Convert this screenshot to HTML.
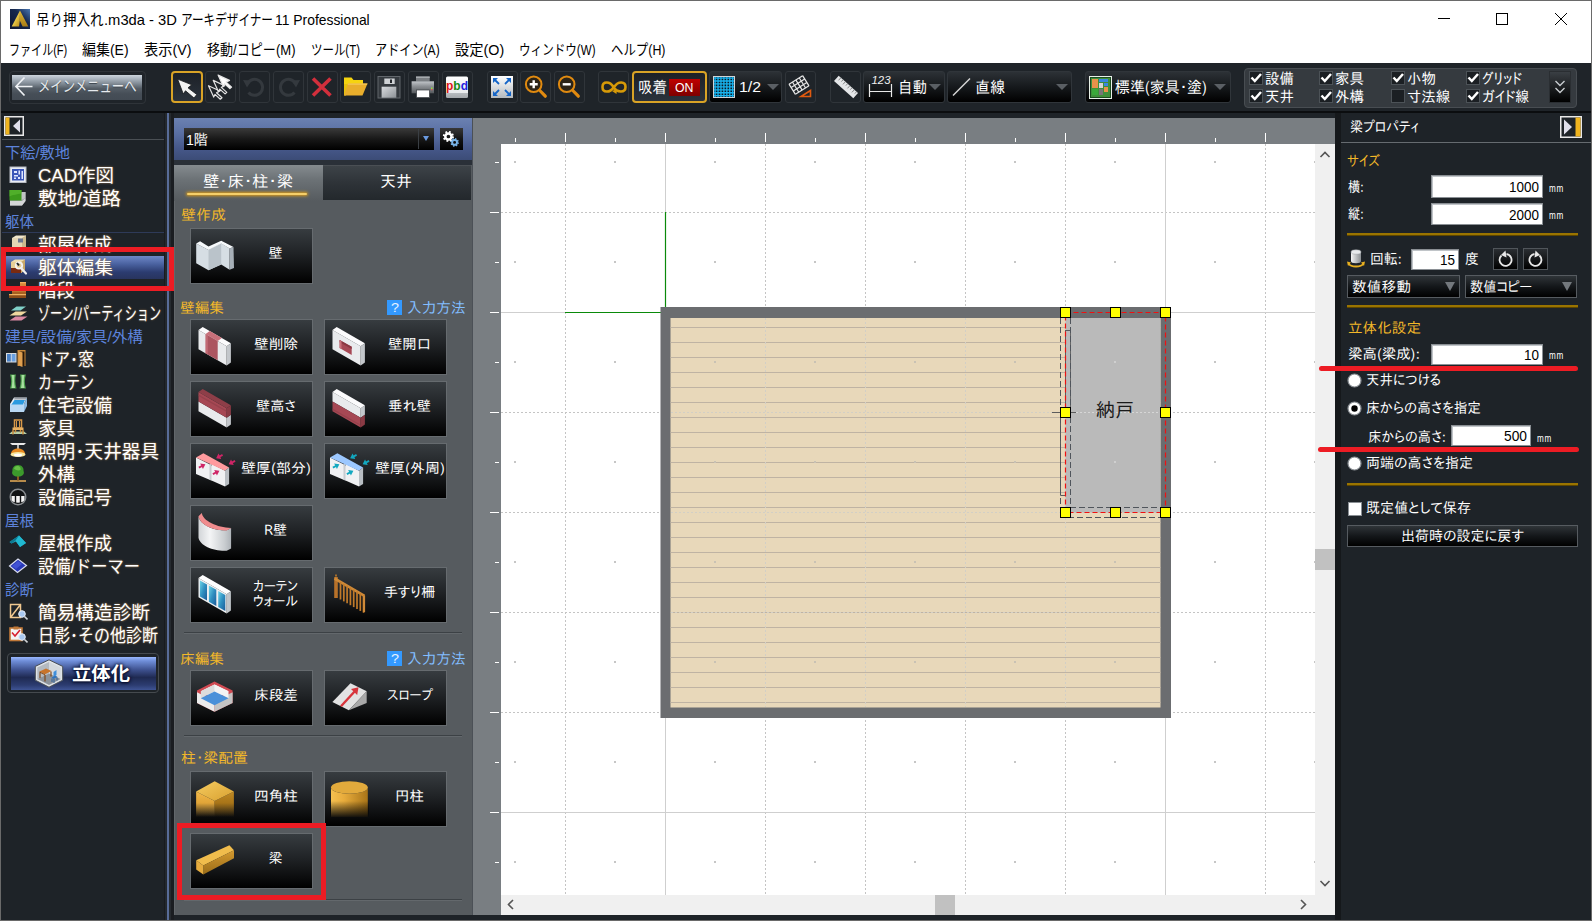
<!DOCTYPE html>
<html lang="ja">
<head>
<meta charset="utf-8">
<title>吊り押入れ.m3da - 3D アーキデザイナー11 Professional</title>
<style>
html,body{margin:0;padding:0;background:#1e2328;}
body{width:1592px;height:921px;overflow:hidden;position:relative;font-family:"Liberation Sans","Noto Sans CJK JP",sans-serif;}
#app{position:absolute;left:0;top:0;width:1592px;height:921px;overflow:hidden;background:#1e2328;}
.abs{position:absolute;}
.t{white-space:nowrap;transform-origin:0 50%;}
.ui{font-family:"Liberation Sans","Noto Sans CJK JP",sans-serif;}
.gothic{font-family:"Liberation Sans","IPAPGothic","IPAGothic",sans-serif;}
.gothicj{font-family:"IPAPGothic","IPAGothic","Liberation Sans",sans-serif;}

#titlebar{left:1px;top:1px;width:1590px;height:62px;background:#fff;}
#toolbar{left:1px;top:63px;width:1590px;height:48px;background:#1f2429;}
#toolbar-line{left:1px;top:111px;width:1590px;height:2px;background:#0b0d0f;}
#wb{left:0;top:0;width:1590px;height:919px;border:1px solid #4d5155;border-top-color:#3c3f42;pointer-events:none;}
.tb{top:71px;width:31px;height:31.500px;box-sizing:border-box;border:1px solid #30353a;border-radius:3px;background:#1f2429;}
.dd{top:71px;height:32px;box-sizing:border-box;border:1px solid #30353a;border-radius:3px;background:linear-gradient(#2c3136 0%,#16191c 50%,#000 100%);}
.arr{width:0;height:0;border-left:6px solid transparent;border-right:6px solid transparent;border-top:6px solid #5a5f64;}
.cb{width:14px;height:14px;box-sizing:border-box;border:1px solid #4c5257;background:#1b1f23;}

.sbh{color:#5d83dc;}
.sbi{color:#fff;text-shadow:0 0 2px #c8a070,0 0 1px #000;}

.pb{width:123px;height:56px;box-sizing:border-box;border:1px solid #666b6f;background:linear-gradient(#373c40 0%,#202326 45%,#0c0d0e 80%,#000 100%);}
.sec{color:#f3b829;}
.hlp{color:#82beff;}

.inp{background:#fff;border:1px solid #8a8f94;box-sizing:border-box;box-shadow:inset 1px 1px 0 #c0c4c8;}
.rdd{background:linear-gradient(#2f3438 0%,#14171a 50%,#000 100%);border:1px solid #565b60;box-sizing:border-box;}
.ysep{height:2px;background:#9a7400;border-bottom:1px solid #5c4500;}

</style>
</head>
<body>
<div id="app">
<div class="abs" id="titlebar"></div>
<div class="abs" id="toolbar"></div>
<div class="abs" id="toolbar-line"></div>

<svg class="abs" style="left:10px;top:9px" width="20" height="20" viewBox="0 0 20 20"><defs><linearGradient id="gti1" x1="0" y1="0" x2="1" y2="1"><stop offset="0" stop-color="#fdf3a0"/><stop offset=".5" stop-color="#e8c848"/><stop offset="1" stop-color="#b88a18"/></linearGradient><linearGradient id="gti2" x1="0" y1="0" x2="0" y2="1"><stop offset="0" stop-color="#e0b838"/><stop offset="1" stop-color="#a87c14"/></linearGradient><linearGradient id="gti3" x1="0" y1="1" x2="1" y2="0"><stop offset="0" stop-color="#0c1430"/><stop offset=".6" stop-color="#16284e"/><stop offset="1" stop-color="#4a78b4"/></linearGradient></defs><rect width="20" height="20" fill="url(#gti3)"/><path d="M10 1.500 L9.800 11.400 L9.100 17.500 L1.700 17.500 Z" fill="url(#gti1)"/><path d="M10 1.500 L18.300 17.500 L12.600 17.500 L9.800 11.400 Z" fill="url(#gti2)"/></svg>
<svg class="abs" style="left:1430px;top:1px" width="161" height="37" viewBox="0 0 161 37"><g stroke="#000" stroke-width="1" fill="none"><path d="M8 17.500 H20"/><rect x="66.500" y="12.500" width="11" height="11"/><path d="M125 12 L137 24 M137 12 L125 24"/></g></svg>
<div class="abs ui" style="left:36.4px;top:9px;font-size:15px;line-height:21px;color:#000;white-space:nowrap;"><span class="t" style="display:inline-block;white-space:pre;transform:scaleX(0.8985);margin-right:-7.12px;">吊り押入れ</span><span class="t" style="display:inline-block;white-space:pre;transform:scaleX(0.9837);margin-right:-1.27px;">.m3da - 3D </span><span class="t" style="display:inline-block;white-space:pre;transform:scaleX(0.7743);margin-right:-25.61px;">アーキデザイナー</span><span class="t" style="display:inline-block;white-space:pre;transform:scaleX(0.9257);margin-right:-7.60px;">11 Professional</span></div>
<div class="abs t ui" style="left:8.5px;top:40px;font-size:14.5px;line-height:20px;color:#000;transform:scaleX(0.7619);">ファイル(F)</div>
<div class="abs t ui" style="left:82px;top:40px;font-size:14.5px;line-height:20px;color:#000;transform:scaleX(0.9639);">編集(E)</div>
<div class="abs t ui" style="left:144px;top:40px;font-size:14.5px;line-height:20px;color:#000;transform:scaleX(0.9825);">表示(V)</div>
<div class="abs t ui" style="left:207px;top:40px;font-size:14.5px;line-height:20px;color:#000;transform:scaleX(0.9006);">移動/コピー(M)</div>
<div class="abs t ui" style="left:311px;top:40px;font-size:14.5px;line-height:20px;color:#000;transform:scaleX(0.7901);">ツール(T)</div>
<div class="abs t ui" style="left:375px;top:40px;font-size:14.5px;line-height:20px;color:#000;transform:scaleX(0.8365);">アドイン(A)</div>
<div class="abs t ui" style="left:454.8px;top:40px;font-size:14.5px;line-height:20px;color:#000;transform:scaleX(0.9852);">設定(O)</div>
<div class="abs t ui" style="left:519px;top:40px;font-size:14.5px;line-height:20px;color:#000;transform:scaleX(0.7982);">ウィンドウ(W)</div>
<div class="abs t ui" style="left:610.5px;top:40px;font-size:14.5px;line-height:20px;color:#000;transform:scaleX(0.8564);">ヘルプ(H)</div>

<div class="abs" style="left:8.500px;top:71px;width:137px;height:32.500px;box-sizing:border-box;border:1px solid #2f3439;border-radius:4px;"></div><div class="abs" style="left:11.500px;top:74.500px;width:130px;height:25px;background:linear-gradient(#ccd4dc 0%,#adb7c1 14%,#828c96 34%,#555e67 54%,#464e57 75%,#434b54 100%);"></div><svg class="abs" style="left:11.500px;top:74.500px" width="30" height="25" viewBox="0 0 30 25"><path d="M4 11.500 H20.500 M12.500 2.500 L4 11.500 L12.500 20.500" stroke="#eef1f4" stroke-width="1.700" fill="none"/></svg><div class="abs t ui" style="left:37.7px;top:76px;font-size:15.5px;line-height:22px;color:#e6eaee;text-shadow:0 1px 1px #3a424a;transform:scaleX(0.7973);">メインメニューへ</div>
<div class="abs tb" style="left:171px;width:32px;height:32px;border:2px solid #d9a326;background:linear-gradient(#1d2127,#2b323c);border-radius:4px;"></div><svg class="abs" style="left:171px;top:71px" width="32" height="32" viewBox="0 0 32 32"><path d="M6.600 8.100 L20.800 13.800 L17 16.800 L25.800 23.500 L23 27 L14.500 19.800 L12.300 23 Z" fill="#f2f2f2" stroke="#15181b" stroke-width=".800"/></svg>
<div class="abs tb" style="left:205px;width:31px;"></div><svg class="abs" style="left:204.5px;top:71px" width="32" height="32" viewBox="0 0 32 32"><g stroke="#e4e4e4" stroke-width="1.200" stroke-linejoin="round"><path transform="translate(3.500 14.700)" d="M0 0 L11.400 5.300 L8 7 L13.500 12 L11.800 13.500 L6.500 8.700 L5.200 11.400 Z" fill="#1f2429"/><path transform="translate(8.300 9.400)" d="M0 0 L11.400 5.300 L8 7 L13.500 12 L11.800 13.500 L6.500 8.700 L5.200 11.400 Z" fill="#1f2429"/><path transform="translate(13.100 4.100)" d="M0 0 L11.400 5.300 L8 7 L13.500 12 L11.800 13.500 L6.500 8.700 L5.200 11.400 Z" fill="#fff"/></g></svg>
<div class="abs tb" style="left:239px;width:31px;"></div><svg class="abs" style="left:238.5px;top:71px" width="32" height="32" viewBox="0 0 32 32"><path d="M8.500 12.500 A8 8 0 1 1 9.500 21.500" stroke="#34393e" stroke-width="3" fill="none"/><path d="M4 9 L12.500 9.500 L8 16.500 Z" fill="#34393e"/></svg>
<div class="abs tb" style="left:272.5px;width:31px;"></div><svg class="abs" style="left:272.0px;top:71px" width="32" height="32" viewBox="0 0 32 32"><path d="M23.500 12.500 A8 8 0 1 0 22.500 21.500" stroke="#34393e" stroke-width="3" fill="none"/><path d="M28 9 L19.500 9.500 L24 16.500 Z" fill="#34393e"/></svg>
<div class="abs tb" style="left:306.5px;width:31px;"></div><svg class="abs" style="left:306.0px;top:71px" width="32" height="32" viewBox="0 0 32 32"><path d="M7 7.500 L24.500 24.500 M24.500 7.500 L7 24.500" stroke="#d22f3c" stroke-width="3.600"/></svg>
<div class="abs tb" style="left:339.5px;width:31px;"></div><svg class="abs" style="left:339.0px;top:71px" width="32" height="32" viewBox="0 0 32 32"><path d="M5 6.500 H12.500 L14.500 9 H24 V13 H5 Z" fill="#f6d40f"/><path d="M5 13 V24.500 H7 L10 13 Z" fill="#e8c20c"/><path d="M9 12.500 H28.500 L23.500 24.500 H5 Z" fill="#e9ae2c"/><path d="M9 12.500 H28.500 L28 13.800 H8.600 Z" fill="#f3c75a"/></svg>
<div class="abs tb" style="left:373.5px;width:31px;"></div><svg class="abs" style="left:373.0px;top:71px" width="32" height="32" viewBox="0 0 32 32"><defs><linearGradient id="gsv" x1="0" y1="0" x2="1" y2="1"><stop offset="0" stop-color="#d9dcdf"/><stop offset="1" stop-color="#8c9196"/></linearGradient></defs><rect x="5" y="5.500" width="22" height="21.500" fill="#353a3f" stroke="#62676c" stroke-width="1"/><rect x="11.300" y="7.500" width="10.400" height="5.500" fill="#cfd2d5"/><rect x="17" y="8.500" width="2" height="3.500" fill="#24282c"/><rect x="8.600" y="15.700" width="14.700" height="11" fill="url(#gsv)"/></svg>
<div class="abs tb" style="left:407.5px;width:31px;"></div><svg class="abs" style="left:407.0px;top:71px" width="32" height="32" viewBox="0 0 32 32"><defs><linearGradient id="gpr" x1="0" y1="0" x2="0" y2="1"><stop offset="0" stop-color="#c2c6ca"/><stop offset=".4" stop-color="#8e9296"/><stop offset="1" stop-color="#54585c"/></linearGradient></defs><rect x="9" y="5.500" width="13.700" height="5" fill="#7a7e82"/><rect x="9" y="5.500" width="13.700" height="1.500" fill="#a6aaae"/><rect x="4.600" y="10.300" width="22.400" height="12" fill="url(#gpr)"/><rect x="9.600" y="19" width="12.900" height="7.600" fill="#fff" stroke="#3a3e42" stroke-width=".700"/><rect x="24" y="16.500" width="1.500" height="1.500" fill="#8ee040"/><rect x="24" y="18" width="1.500" height="1.200" fill="#e05050"/></svg>
<div class="abs tb" style="left:441.5px;width:31px;"></div><svg class="abs" style="left:441.0px;top:71px" width="32" height="32" viewBox="0 0 32 32"><defs><linearGradient id="gpb" x1="0" y1="0" x2="0" y2="1"><stop offset="0" stop-color="#fff"/><stop offset=".75" stop-color="#e9ebed"/><stop offset=".76" stop-color="#b9bdc1"/><stop offset="1" stop-color="#a4a8ac"/></linearGradient></defs><rect x="5" y="5.500" width="22" height="21.500" rx="1.500" fill="url(#gpb)"/><text x="5" y="19.300" font-family="Liberation Sans,sans-serif" font-weight="bold" font-size="13" textLength="22" lengthAdjust="spacingAndGlyphs"><tspan fill="#e01818">p</tspan><tspan fill="#148a14">b</tspan><tspan fill="#2222dd">d</tspan></text></svg>
<div class="abs tb" style="left:486.5px;width:31px;"></div><svg class="abs" style="left:486.0px;top:71px" width="32" height="32" viewBox="0 0 32 32"><defs><linearGradient id="gft" x1="0" y1="0" x2="0" y2="1"><stop offset="0" stop-color="#fff"/><stop offset="1" stop-color="#b4b9be"/></linearGradient></defs><rect x="5" y="5" width="22" height="22" fill="url(#gft)"/><g stroke="#1565c8" stroke-width="1.800" fill="#1565c8"><path d="M13 13 L8 8 M19 13 L24 8 M13 19 L8 24 M19 19 L24 24" fill="none"/><path d="M7 7 H12 L7 12 Z M25 7 H20 L25 12 Z M7 25 H12 L7 20 Z M25 25 H20 L25 20 Z" stroke="none"/></g></svg>
<div class="abs tb" style="left:520px;width:31px;"></div><svg class="abs" style="left:519.5px;top:71px" width="32" height="32" viewBox="0 0 32 32"><circle cx="13.700" cy="13.300" r="7.800" fill="#2b2418" stroke="#e08a10" stroke-width="2"/><path d="M19.800 19.500 L25.300 25.200" stroke="#e08a10" stroke-width="3.200" stroke-linecap="round"/><path d="M9.700 13.300 H17.700 M13.700 9.300 V17.300" stroke="#fff" stroke-width="2.400"/></svg>
<div class="abs tb" style="left:553.5px;width:31px;"></div><svg class="abs" style="left:553.0px;top:71px" width="32" height="32" viewBox="0 0 32 32"><circle cx="13.700" cy="13.300" r="7.800" fill="#2b2418" stroke="#e08a10" stroke-width="2"/><path d="M19.800 19.500 L25.300 25.200" stroke="#e08a10" stroke-width="3.200" stroke-linecap="round"/><path d="M9.700 13.300 H17.700" stroke="#fff" stroke-width="2.400"/></svg>
<div class="abs tb" style="left:598px;width:31px;"></div><svg class="abs" style="left:597.5px;top:71px" width="32" height="32" viewBox="0 0 32 32"><path d="M15.500 16.500 C12 22 4.500 22 4.500 16 C4.500 10 12 10 15.500 16 C19 22 27.500 22 27.500 16 C27.500 10 20 10 16.500 15.500" stroke="#d79a08" stroke-width="2.600" fill="none"/><path d="M14 20 L19 18 L18.500 23 Z" fill="#d79a08"/></svg>
<div class="abs tb" style="left:632px;width:75px;height:32px;border:2px solid #d9a326;background:linear-gradient(#1d2127,#2b323c);border-radius:4px;"></div><svg class="abs" style="left:632px;top:71px" width="32" height="32" viewBox="0 0 32 32"></svg>
<div class="abs t gothicj" style="left:638px;top:76px;font-size:16px;line-height:22px;color:#fff;transform:scaleX(0.9062);">吸着</div>
<div class="abs" style="left:669px;top:79px;width:31px;height:17px;background:linear-gradient(#c00000,#7e0000);"></div><div class="abs t ui" style="left:675px;top:78.5px;font-size:13px;line-height:18px;color:#fff;transform:scaleX(0.9487);">ON</div>
<div class="abs dd" style="left:709px;width:73px"></div><svg class="abs" style="left:713px;top:76px" width="22" height="22" viewBox="0 0 21 21"><rect x=".500" y=".500" width="20" height="20" fill="#0c1a24" stroke="#cfd3d6" stroke-width="1"/><g stroke="#18b4f0" stroke-width="1.250"><path d="M2.0 1 V20 M1 2.0 H20" /><path d="M4.8 1 V20 M1 4.8 H20" /><path d="M7.6 1 V20 M1 7.6 H20" /><path d="M10.4 1 V20 M1 10.4 H20" /><path d="M13.2 1 V20 M1 13.2 H20" /><path d="M16.0 1 V20 M1 16.0 H20" /><path d="M18.8 1 V20 M1 18.8 H20" /></g></svg><div class="abs t gothic" style="left:738.5px;top:76px;font-size:15px;line-height:21px;color:#fff;transform:scaleX(1.0547);">1/2</div>
<div class="abs arr" style="left:767px;top:84px"></div><div class="abs tb" style="left:784.5px;width:31px;"></div><svg class="abs" style="left:784.0px;top:71px" width="32" height="32" viewBox="0 0 32 32"><g transform="translate(15 14) rotate(-32)" stroke="#e8e8e8" stroke-width="1.200" fill="none"><path d="M-8 -6 V6"/><path d="M-4 -6 V6"/><path d="M0 -6 V6"/><path d="M4 -6 V6"/><path d="M8 -6 V6"/><path d="M-8 -6 H8"/><path d="M-8 -2 H8"/><path d="M-8 2 H8"/><path d="M-8 6 H8"/></g><path d="M17 25.500 H26.500 V19.500 Z" fill="none" stroke="#e05a10" stroke-width="1.600"/></svg>
<div class="abs tb" style="left:830px;width:31px;"></div><svg class="abs" style="left:829.5px;top:71px" width="32" height="32" viewBox="0 0 32 32"><g transform="translate(16 16) rotate(42)"><rect x="-13" y="-3.500" width="26" height="7" fill="#e4e6e8"/><path d="M-10 -3.500 V0 M-7 -3.500 V-1 M-4 -3.500 V0 M-1 -3.500 V-1 M2 -3.500 V0 M5 -3.500 V-1 M8 -3.500 V0 M11 -3.500 V-1" stroke="#777" stroke-width=".800"/></g></svg>
<div class="abs dd" style="left:863px;width:82px"></div><svg class="abs" style="left:866px;top:73px" width="30" height="28" viewBox="0 0 30 28"><path d="M3.500 11 V24 M25.500 11 V24 M3.500 18.500 H25.500" stroke="#e8e8e8" stroke-width="1.200" fill="none"/><text x="5.500" y="11" font-family="Liberation Sans,sans-serif" font-style="italic" font-size="10.500" fill="#f0f0f0" textLength="19" lengthAdjust="spacingAndGlyphs">123</text></svg><div class="abs t gothicj" style="left:898px;top:75.5px;font-size:16px;line-height:22px;color:#fff;transform:scaleX(0.9062);">自動</div>
<div class="abs arr" style="left:929px;top:84px"></div><div class="abs dd" style="left:947px;width:125px"></div><svg class="abs" style="left:950px;top:73px" width="24" height="28" viewBox="0 0 24 28"><path d="M3 22.500 L20 5.500" stroke="#d8d8d8" stroke-width="1.400"/></svg><div class="abs t gothicj" style="left:975px;top:75.5px;font-size:16px;line-height:22px;color:#fff;transform:scaleX(0.9375);">直線</div>
<div class="abs arr" style="left:1056px;top:84px"></div><div class="abs dd" style="left:1085px;width:146px"></div><svg class="abs" style="left:1089px;top:76px" width="23" height="23" viewBox="0 0 23 23"><rect x=".500" y=".500" width="22" height="22" fill="#1c4a20" stroke="#e8f0e8" stroke-width="1"/><rect x="2" y="2" width="19" height="19" fill="#3f8f3a"/><rect x="3" y="3" width="6" height="9" fill="#e8924a"/><rect x="10" y="3" width="9" height="3" fill="#3b86e0"/><rect x="10" y="7" width="4" height="5" fill="#d6d6d6"/><rect x="15" y="7" width="4" height="3" fill="#3b86e0"/><rect x="15" y="11" width="4" height="5" fill="#e8924a"/><rect x="10" y="13" width="4" height="6" fill="#777"/><rect x="3" y="13" width="6" height="6" fill="#3aa83a"/></svg><div class="abs t gothicj" style="left:1115px;top:75.5px;font-size:16px;line-height:22px;color:#fff;transform:scaleX(0.9325);">標準(家具･塗)</div>
<div class="abs arr" style="left:1214px;top:84px"></div><div class="abs" style="left:1244px;top:68px;width:333px;height:40px;box-sizing:border-box;border:1px solid #484d52;border-radius:4px;background:#353a3f;"></div><div class="abs cb" style="left:1249px;top:71px"><svg width="12" height="12" viewBox="0 0 12 12" style="position:absolute;left:0;top:0"><path d="M1.500 5.500 L4.800 9 L11 2" stroke="#fff" stroke-width="2.500" fill="none"/></svg></div><div class="abs t gothicj" style="left:1265px;top:68px;font-size:15px;line-height:21px;color:#fff;transform:scaleX(0.9667);">設備</div>
<div class="abs cb" style="left:1249px;top:89px"><svg width="12" height="12" viewBox="0 0 12 12" style="position:absolute;left:0;top:0"><path d="M1.500 5.500 L4.800 9 L11 2" stroke="#fff" stroke-width="2.500" fill="none"/></svg></div><div class="abs t gothicj" style="left:1265px;top:86px;font-size:15px;line-height:21px;color:#fff;transform:scaleX(0.9667);">天井</div>
<div class="abs cb" style="left:1319px;top:71px"><svg width="12" height="12" viewBox="0 0 12 12" style="position:absolute;left:0;top:0"><path d="M1.500 5.500 L4.800 9 L11 2" stroke="#fff" stroke-width="2.500" fill="none"/></svg></div><div class="abs t gothicj" style="left:1335px;top:68px;font-size:15px;line-height:21px;color:#fff;transform:scaleX(0.9667);">家具</div>
<div class="abs cb" style="left:1319px;top:89px"><svg width="12" height="12" viewBox="0 0 12 12" style="position:absolute;left:0;top:0"><path d="M1.500 5.500 L4.800 9 L11 2" stroke="#fff" stroke-width="2.500" fill="none"/></svg></div><div class="abs t gothicj" style="left:1335px;top:86px;font-size:15px;line-height:21px;color:#fff;transform:scaleX(0.9667);">外構</div>
<div class="abs cb" style="left:1391px;top:71px"><svg width="12" height="12" viewBox="0 0 12 12" style="position:absolute;left:0;top:0"><path d="M1.500 5.500 L4.800 9 L11 2" stroke="#fff" stroke-width="2.500" fill="none"/></svg></div><div class="abs t gothicj" style="left:1407px;top:68px;font-size:15px;line-height:21px;color:#fff;transform:scaleX(0.9667);">小物</div>
<div class="abs cb" style="left:1391px;top:89px"></div><div class="abs t gothicj" style="left:1407px;top:86px;font-size:15px;line-height:21px;color:#fff;transform:scaleX(0.9556);">寸法線</div>
<div class="abs cb" style="left:1466px;top:71px"><svg width="12" height="12" viewBox="0 0 12 12" style="position:absolute;left:0;top:0"><path d="M1.500 5.500 L4.800 9 L11 2" stroke="#fff" stroke-width="2.500" fill="none"/></svg></div><div class="abs t gothicj" style="left:1482px;top:68px;font-size:15px;line-height:21px;color:#fff;transform:scaleX(0.8573);">グリッド</div>
<div class="abs cb" style="left:1466px;top:89px"><svg width="12" height="12" viewBox="0 0 12 12" style="position:absolute;left:0;top:0"><path d="M1.500 5.500 L4.800 9 L11 2" stroke="#fff" stroke-width="2.500" fill="none"/></svg></div><div class="abs t gothicj" style="left:1482px;top:86px;font-size:15px;line-height:21px;color:#fff;transform:scaleX(0.9107);">ガイド線</div>
<div class="abs" style="left:1549px;top:71px;width:22px;height:32px;background:linear-gradient(#3a3f44,#000);border:1px solid #2a2e32;box-sizing:border-box;"></div><svg class="abs" style="left:1549px;top:71px" width="22" height="32" viewBox="0 0 22 32"><path d="M6.500 10 L11 14.500 L15.500 10 M6.500 17 L11 21.500 L15.500 17" stroke="#c8ccd0" stroke-width="1.400" fill="none"/></svg>
<div class="abs" style="left:164px;top:113px;width:10px;height:808px;background:linear-gradient(90deg,#181b1f 0,#181b1f 1px,#23282d 1px,#23282d 3px,#586c98 3px,#586c98 5px,#262b30 5px,#262b30 7.500px,#1a1d21 7.500px);"></div><svg class="abs" style="left:4px;top:116px" width="20" height="20" viewBox="0 0 20 20"><rect x=".750" y=".750" width="18.500" height="18.500" fill="#1e2328" stroke="#e8e8e8" stroke-width="1.500"/><rect x="1.500" y="1.500" width="4" height="17" fill="#f0b41e"/><path d="M16 3.500 V16.500 L9 10 Z" fill="#e0e0ec"/></svg><div class="abs" style="left:2px;top:139px;width:162px;height:1px;background:#4a4f54;"></div><div class="abs" style="left:2px;top:232px;width:162px;height:1px;background:#2e3a58;"></div><div class="abs t ui sbh" style="left:5px;top:141.5px;font-size:15px;line-height:21px;color:#5d83dc;transform:scaleX(1.0129);">下絵/敷地</div>
<div class="abs t ui sbi" style="left:38px;top:163.6px;font-size:18px;line-height:25px;color:#fff;transform:scaleX(1.0268);">CAD作図</div>
<div class="abs t ui sbi" style="left:38px;top:186.6px;font-size:18px;line-height:25px;color:#fff;transform:scaleX(1.0777);">敷地/道路</div>
<div class="abs t ui sbh" style="left:5px;top:210.5px;font-size:15px;line-height:21px;color:#5d83dc;transform:scaleX(0.9662);">躯体</div>
<div class="abs t ui sbi" style="left:38px;top:232.6px;font-size:18px;line-height:25px;color:#fff;transform:scaleX(1.0278);">部屋作成</div>
<div class="abs" style="left:6px;top:256px;width:158px;height:23px;background:linear-gradient(#6f88c8 0%,#4a62a0 35%,#2c3c70 70%,#28345e 100%);"></div><div class="abs t ui sbi" style="left:38px;top:255.6px;font-size:18px;line-height:25px;color:#fff;transform:scaleX(1.0417);">躯体編集</div>
<div class="abs t ui sbi" style="left:38px;top:278.6px;font-size:18px;line-height:25px;color:#fff;transform:scaleX(1.0278);">階段</div>
<div class="abs t ui sbi" style="left:38px;top:301.6px;font-size:18px;line-height:25px;color:#fff;transform:scaleX(0.6720);">ゾーン/パーティション</div>
<div class="abs t ui sbh" style="left:5px;top:325.5px;font-size:15px;line-height:21px;color:#5d83dc;transform:scaleX(1.0414);">建具/設備/家具/外構</div>
<div class="abs t ui sbi" style="left:38px;top:347.6px;font-size:18px;line-height:25px;color:#fff;transform:scaleX(0.8889);">ドア･窓</div>
<div class="abs t ui sbi" style="left:38px;top:370.6px;font-size:18px;line-height:25px;color:#fff;transform:scaleX(0.7778);">カーテン</div>
<div class="abs t ui sbi" style="left:38px;top:393.6px;font-size:18px;line-height:25px;color:#fff;transform:scaleX(1.0278);">住宅設備</div>
<div class="abs t ui sbi" style="left:38px;top:416.6px;font-size:18px;line-height:25px;color:#fff;transform:scaleX(1.0278);">家具</div>
<div class="abs t ui sbi" style="left:38px;top:439.6px;font-size:18px;line-height:25px;color:#fff;transform:scaleX(1.0342);">照明･天井器具</div>
<div class="abs t ui sbi" style="left:38px;top:462.6px;font-size:18px;line-height:25px;color:#fff;transform:scaleX(1.0278);">外構</div>
<div class="abs t ui sbi" style="left:38px;top:485.6px;font-size:18px;line-height:25px;color:#fff;transform:scaleX(1.0278);">設備記号</div>
<div class="abs t ui sbh" style="left:5px;top:509.5px;font-size:15px;line-height:21px;color:#5d83dc;transform:scaleX(0.9662);">屋根</div>
<div class="abs t ui sbi" style="left:38px;top:531.6px;font-size:18px;line-height:25px;color:#fff;transform:scaleX(1.0278);">屋根作成</div>
<div class="abs t ui sbi" style="left:38px;top:554.6px;font-size:18px;line-height:25px;color:#fff;transform:scaleX(0.9025);">設備/ドーマー</div>
<div class="abs t ui sbh" style="left:5px;top:578.5px;font-size:15px;line-height:21px;color:#5d83dc;transform:scaleX(0.9662);">診断</div>
<div class="abs t ui sbi" style="left:38px;top:600.6px;font-size:18px;line-height:25px;color:#fff;transform:scaleX(1.0370);">簡易構造診断</div>
<div class="abs t ui sbi" style="left:38px;top:623.6px;font-size:18px;line-height:25px;color:#fff;transform:scaleX(0.8889);">日影･その他診断</div>
<div class="abs" style="left:7px;top:653px;width:152px;height:40px;box-sizing:border-box;border:1px solid #454a4f;border-radius:4px;"></div><div class="abs" style="left:10.500px;top:657px;width:145px;height:33px;background:linear-gradient(#9ab8ff 0%,#6f8ed8 12%,#3c4f8c 40%,#1f2a52 62%,#2c3c70 85%,#3f5494 100%);"></div><svg class="abs" style="left:34px;top:659px" width="30" height="29" viewBox="0 0 30 29"><path d="M15 .800 L28.700 7.400 V21.200 L15 28.200 L1.300 21.200 V7.400 Z" fill="#dfe3e7" stroke="#4a4f55" stroke-width="1"/><path d="M15 3 L3.300 8.600 V20 L15 14.500 Z" fill="#b4bac0"/><path d="M15 3 L26.700 8.600 V20 L15 14.500 Z" fill="#d4d8dc"/><path d="M3.300 20 L15 14.500 L26.700 20 L15 26 Z" fill="#8d939a"/><path d="M5.500 12.500 L12 9.500 L17.500 12 L11 15.200 Z" fill="#c8742a"/><path d="M5.500 12.500 L11 15.200 V16.300 L5.500 13.600 Z" fill="#8a4a14"/><path d="M6 13.500 V19 M11 16 V22.500 M17 12.500 V17.500" stroke="#7a4010" stroke-width="1.100"/><path d="M19.500 13 L22.500 11 V16 L19.500 18 Z" fill="#3f8fdc"/><path d="M17.500 18.500 L21.500 16.500 L23.500 18 L19.500 20 Z" fill="#2f74be"/><path d="M18 19.500 V23 M23 18.500 V21.500 M20 20 V24" stroke="#245c9a" stroke-width=".900"/></svg><div class="abs t ui" style="left:72px;top:660.5px;font-size:18.5px;line-height:26px;color:#fff;font-weight:bold;text-shadow:0 0 3px #0a1030,0 1px 2px #0a1030,0 0 4px #0a1030;transform:scaleX(1.0448);">立体化</div>
<svg class="abs" style="left:8px;top:166px" width="20" height="18" viewBox="0 0 20 18"><rect x="2" y="1" width="16" height="15.500" fill="#e8ecf4" stroke="#b8bcc4" stroke-width="1"/><rect x="4" y="3" width="12" height="11.500" fill="#3a56b8"/><path d="M6 5 h3 v2 h-3z M10.500 4.500 h1.500 v4 h-1.500z M13.500 5 h1.500 v8 h-1.500z M6 9 h4 v1.500 h-4z M6 11.500 h2 v1.500 h-2z M10 11 h2 v2 h-2z" fill="#dfe6ff"/></svg>
<svg class="abs" style="left:8px;top:189px" width="20" height="18" viewBox="0 0 20 18"><path d="M2 3 H17.500 V12 L14 16.500 H2 Z" fill="#9a9ea2"/><path d="M2 12 H14 L17.500 9 V12 L14 16.500 H2 Z" fill="#d4d6d8"/><path d="M12.500 3 H17.500 V9 L12.500 11.500 Z" fill="#c0c3c6"/><rect x="1.500" y="1" width="12" height="10.500" fill="#3c9a1c"/><path d="M1.500 1 H13.500 V4.500 C9 5.500 5 5.500 1.500 7.500 Z" fill="#58b830" opacity=".7"/></svg>
<svg class="abs" style="left:8px;top:235px" width="20" height="18" viewBox="0 0 20 18"><path d="M4 3 L8 .500 H18 V12 L14 15 H4 Z" fill="#f0e6cc"/><path d="M4 3 H14 V15 H4 Z" fill="#e4d6b4"/><path d="M14 3 L18 .500 V12 L14 15 Z" fill="#cbb98e"/><rect x="10" y="3.500" width="5" height="4" fill="#6a7690"/></svg>
<svg class="abs" style="left:8px;top:258px" width="20" height="18" viewBox="0 0 20 18"><path d="M3 4 L7 1.500 H17 V12 L13 15 H3 Z" fill="#f0dfb0"/><path d="M3 4 H13 V15 H3 Z" fill="#e6cf96"/><path d="M3 10 H13 V15 H3 Z" fill="#7a2a10"/><path d="M13 4 L17 1.500 V12 L13 15 Z" fill="#c9a86a"/><circle cx="11" cy="7.500" r="3.200" fill="none" stroke="#f4f4f4" stroke-width="1.800"/><path d="M9 5 L11 7.500" stroke="#1e2328" stroke-width="2"/><path d="M13 10 L18 15.500" stroke="#f0f0f0" stroke-width="2.200" stroke-linecap="round"/></svg>
<svg class="abs" style="left:8px;top:281px" width="20" height="18" viewBox="0 0 20 18"><path d="M12 1 H18 V5 H12z" fill="#d8883a"/><path d="M8 5 H18 V9 H8z" fill="#c07428"/><path d="M4 9 H18 V13 H4z" fill="#a86020"/><path d="M1 13 H18 V17 H1z" fill="#8a4c18"/><path d="M12 1 H18 V2.200 H12z M8 5 H18 V6.200 H8z M4 9 H18 V10.200 H4z M1 13 H18 V14.200 H1z" fill="#f0b060"/></svg>
<svg class="abs" style="left:8px;top:304.5px" width="20" height="18" viewBox="0 0 20 18"><path d="M1.500 15.500 L7.500 11.500 H19.500 L13.500 15.500 Z" fill="#dc8aa4"/><path d="M1.500 10.500 L7.500 6.500 H19 L13 10.500 Z" fill="#f0d8a0"/><path d="M3 5.500 L8.500 1.500 H18 L12.500 5.500 Z" fill="#80d0c8"/></svg>
<svg class="abs" style="left:6px;top:350px" width="20" height="18" viewBox="0 0 20 18"><rect x="0" y="3" width="10.500" height="9.500" fill="#d8dce0"/><rect x="1" y="4" width="3.800" height="7.500" fill="#4a82c8"/><rect x="5.700" y="4" width="3.800" height="7.500" fill="#6aa0e0"/><rect x="11.500" y="0" width="8" height="16" fill="#c88838"/><rect x="13" y="1.500" width="5.500" height="14.500" fill="#2a1808"/><path d="M12.500 1 L16.500 2.500 V17 L12.500 15.500 Z" fill="#e0a050"/></svg>
<svg class="abs" style="left:8px;top:373px" width="20" height="18" viewBox="0 0 20 18"><path d="M2 1.500 H8 C7 5 7 10 8.500 15.500 H2 C3.500 11 3.500 6 2 1.500 Z" fill="#4a9a4a"/><path d="M18 1.500 H12 C13 5 13 10 11.500 15.500 H18 C16.500 11 16.500 6 18 1.500 Z" fill="#4a9a4a"/><path d="M3.500 2 H6.500 C6 6 6 10 7 15 H3.500 C4.500 10 4.500 6 3.500 2 Z M16.500 2 H13.500 C14 6 14 10 13 15 H16.500 C15.500 10 15.500 6 16.500 2 Z" fill="#a8e0a0"/></svg>
<svg class="abs" style="left:8px;top:396px" width="20" height="18" viewBox="0 0 20 18"><path d="M2 8 L6 1.500 H19 L16 8 Z" fill="#e8eef4"/><path d="M2 8 H16 V16 H2 Z" fill="#b8d8f4"/><path d="M16 8 L19 1.500 V10 L16 16 Z" fill="#8ab8e0"/><path d="M3.500 8.500 L6.500 4 H17 L15 8.500 Z" fill="#2a9ae0"/><path d="M6.500 2 H18.500 L18 3.500 H6 Z" fill="#9aa0a8"/></svg>
<svg class="abs" style="left:8px;top:419px" width="20" height="18" viewBox="0 0 20 18"><path d="M1 15 L4 12.500 H16 L19 15 Z" fill="#b8d0a8"/><path d="M6.500 1 H13.500 V9 H6.500 Z" fill="none" stroke="#d89848" stroke-width="1.500"/><path d="M8.500 2 V8 M11.500 2 V8" stroke="#d89848" stroke-width="1"/><path d="M4.500 8.500 H15.500 V11 H4.500 Z" fill="#e8b060"/><path d="M5 11 V15.500 M15 11 V15.500 M7.500 11 V13.500 M12.500 11 V13.500" stroke="#c88838" stroke-width="1.500"/></svg>
<svg class="abs" style="left:8px;top:442px" width="20" height="18" viewBox="0 0 20 18"><path d="M2 1 H18 L16 3 H4 Z" fill="#e8e8e8"/><path d="M10 3 V7" stroke="#d8d8d8" stroke-width="1.600"/><path d="M3 12 C3 8 7 6.500 10 6.500 C13 6.500 17 8 17 12 Z" fill="#e88a20"/><ellipse cx="10" cy="12.500" rx="7.500" ry="2.600" fill="#f8e8a0"/><ellipse cx="10" cy="13" rx="4" ry="1.500" fill="#ffffff"/></svg>
<svg class="abs" style="left:8px;top:465px" width="20" height="18" viewBox="0 0 20 18"><path d="M2 16 H18" stroke="#c89850" stroke-width="1.800"/><path d="M10 10 V15.500" stroke="#8a5a20" stroke-width="2"/><path d="M10 0 C14 0 16 3 15.500 6 C17 9 14 12 10 11.500 C6 12 3 9 4.500 6 C4 3 6 0 10 0 Z" fill="#3c9a2c"/><path d="M9 1 C12 1 13 3 12.500 5 C10 6 7 5 6 3.500 C6.500 2 7.500 1 9 1 Z" fill="#68c048"/></svg>
<svg class="abs" style="left:8px;top:488px" width="20" height="18" viewBox="0 0 20 18"><circle cx="10" cy="9" r="7.800" fill="#101214" stroke="#8a8e92" stroke-width="1.400"/><path d="M3.500 8 H16.500 V12 C15 15.500 5 15.500 3.500 12 Z" fill="#f4f4f4"/><path d="M7.500 8 V15 M12.500 8 V15" stroke="#101214" stroke-width="1.400"/></svg>
<svg class="abs" style="left:8px;top:534px" width="20" height="18" viewBox="0 0 20 18"><path d="M1.500 8 L11 1.500 L18 9 L12 13 L8 7.500 L3.500 9.500 Z" fill="#18a8c0"/><path d="M11 1.500 L18 9 L12 13 L7 6 Z" fill="#20b8d0"/><path d="M1.500 8 L11 1.500 L7.500 6.500 L3.500 9.500 Z" fill="#0e7890"/></svg>
<svg class="abs" style="left:8px;top:557px" width="20" height="18" viewBox="0 0 20 18"><path d="M1.500 9 L10 2 L18.500 8.500 L9.500 15.500 Z" fill="#2838b8" stroke="#d8dcf0" stroke-width="1.200"/><path d="M4 9 L10 4 L14 7 L8 12 Z" fill="#4a5ce0" opacity=".7"/></svg>
<svg class="abs" style="left:8px;top:603px" width="20" height="18" viewBox="0 0 20 18"><path d="M2.500 1.500 H12.500 V14.500 H2.500 Z M2.500 14.500 L12.500 1.500" fill="none" stroke="#f0c890" stroke-width="1.500"/><circle cx="14" cy="11" r="3.300" fill="#a8c8f0" stroke="#e8eef8" stroke-width="1"/><path d="M16.500 13.500 L19.500 16.500" stroke="#d0d4d8" stroke-width="1.600"/></svg>
<svg class="abs" style="left:8px;top:626px" width="20" height="18" viewBox="0 0 20 18"><rect x="2" y="2" width="12" height="12.500" fill="#f4f4f4" stroke="#c07838" stroke-width="1.600"/><rect x="5.500" y=".500" width="5" height="3" fill="#c07838"/><path d="M4 6.500 L7 10 L12 4" stroke="#d82030" stroke-width="1.600" fill="none"/><circle cx="14" cy="11" r="3.300" fill="#a8c8f0" stroke="#e8eef8" stroke-width="1"/><path d="M16.500 13.500 L19.500 16.500" stroke="#d0d4d8" stroke-width="1.600"/></svg>

<div class="abs" style="left:174px;top:118px;width:299px;height:797px;background:#565b5f;"></div><div class="abs" style="left:174px;top:161px;width:1px;height:754px;background:#62676b;"></div><div class="abs" style="left:174px;top:118px;width:299px;height:43px;background:linear-gradient(#6b81b1 0%,#5a70a4 35%,#46588a 70%,#3b4b75 100%);"></div><div class="abs" style="left:174px;top:160px;width:299px;height:5px;background:#2a3038;"></div><div class="abs" style="left:184px;top:128px;width:250px;height:22px;background:linear-gradient(#3a3a3a,#181818 50%,#000);"></div><div class="abs" style="left:418px;top:129px;width:1px;height:20px;background:#3a3f44;"></div><div class="abs" style="left:422.800px;top:136.300px;width:0;height:0;border-left:3.700px solid transparent;border-right:3.700px solid transparent;border-top:5.500px solid #6a9ae0;"></div><div class="abs t gothic" style="left:186px;top:128.5px;font-size:15px;line-height:21px;color:#fff;transform:scaleX(0.9424);">1階</div>
<div class="abs" style="left:440px;top:128px;width:23px;height:22px;background:linear-gradient(#383838,#141414 50%,#000);"></div><svg class="abs" style="left:440px;top:128px" width="23" height="22" viewBox="0 0 23 22"><circle cx="8.4" cy="8.5" r="3.1" fill="none" stroke="#fff" stroke-width="2.5"/><circle cx="8.4" cy="8.5" r="4.5" fill="none" stroke="#fff" stroke-width="2.2" stroke-dasharray="1.71 1.83"/><circle cx="14.6" cy="14.4" r="2.4" fill="none" stroke="#78b4e8" stroke-width="1.9"/><circle cx="14.6" cy="14.4" r="3.5" fill="none" stroke="#78b4e8" stroke-width="1.7" stroke-dasharray="1.32 1.42"/></svg><div class="abs" style="left:174px;top:165px;width:149px;height:36px;background:linear-gradient(#858b8f 0%,#6c7276 40%,#565b5f 100%);"></div><div class="abs" style="left:323px;top:165px;width:148px;height:35px;background:linear-gradient(#3d4348 0%,#2e3338 50%,#23282c 100%);border-top:1px solid #4a4f54;box-sizing:border-box;"></div><div class="abs t gothicj" style="left:203px;top:170px;font-size:16px;line-height:22px;color:#fff;transform:scaleX(1.0227);">壁･床･柱･梁</div>
<div class="abs t gothicj" style="left:380px;top:170px;font-size:16px;line-height:22px;color:#fff;transform:scaleX(1.0000);">天井</div>
<div class="abs" style="left:187px;top:193px;width:120px;height:2px;border-radius:1px;background:#f5cf6a;box-shadow:0 0 3px 1px #d89a18;"></div><div class="abs t gothicj sec" style="left:181px;top:205px;font-size:14.5px;line-height:20px;color:#f3b829;transform:scaleX(1.0345);">壁作成</div>
<div class="abs t gothicj sec" style="left:180px;top:297.5px;font-size:14.5px;line-height:20px;color:#f3b829;transform:scaleX(1.0115);">壁編集</div>
<div class="abs t gothicj sec" style="left:180px;top:648.5px;font-size:14.5px;line-height:20px;color:#f3b829;transform:scaleX(1.0115);">床編集</div>
<div class="abs t gothicj sec" style="left:181px;top:747.5px;font-size:14.5px;line-height:20px;color:#f3b829;transform:scaleX(1.0268);">柱･梁配置</div>
<div class="abs" style="left:387px;top:300.0px;width:15px;height:15px;background:#3399ff;"></div><div class="abs t ui" style="left:390.5px;top:299px;font-size:13px;line-height:18px;color:#e8f2ff;transform:scaleX(1.1058);">?</div>
<div class="abs t gothicj hlp" style="left:406.5px;top:296.7px;font-size:15px;line-height:21px;color:#82beff;transform:scaleX(0.9750);">入力方法</div>
<div class="abs" style="left:387px;top:651.0px;width:15px;height:15px;background:#3399ff;"></div><div class="abs t ui" style="left:390.5px;top:650px;font-size:13px;line-height:18px;color:#e8f2ff;transform:scaleX(1.1058);">?</div>
<div class="abs t gothicj hlp" style="left:406.5px;top:647.7px;font-size:15px;line-height:21px;color:#82beff;transform:scaleX(0.9750);">入力方法</div>
<div class="abs" style="left:184px;top:631.5px;width:278px;height:1px;background:#3c4145;"></div><div class="abs" style="left:184px;top:632.5px;width:278px;height:1px;background:#63686c;"></div><div class="abs" style="left:184px;top:734.5px;width:278px;height:1px;background:#3c4145;"></div><div class="abs" style="left:184px;top:735.5px;width:278px;height:1px;background:#63686c;"></div><div class="abs" style="left:184px;top:898.5px;width:278px;height:1px;background:#3c4145;"></div><div class="abs" style="left:184px;top:899.5px;width:278px;height:1px;background:#63686c;"></div><div class="abs pb" style="left:190px;top:228px"></div><svg class="abs" style="left:190px;top:228px" width="50" height="56" viewBox="0 0 50 56"><path d="M6.200 15.500 L18.500 22 L31.200 15.300 L39.600 20.400 L39.600 41.800 L31.200 36.500 L18.500 42.200 L6.200 35.200 Z" fill="#d6dee4"/><path d="M18.500 22 L31.200 15.300 L31.200 36.500 L18.500 42.200 Z" fill="#bac3ca"/><path d="M6.200 15.500 L10.100 13.200 L18.500 18.500 L31.200 12.800 L43.500 18.900 L39.600 20.600 L31.200 15.500 L18.500 22 Z" fill="#f6f9fb"/><path d="M39.600 20.600 L43.500 18.900 L44 40 L39.600 41.800 Z" fill="#a7b0b8"/></svg><div class="abs t gothicj" style="left:268.5px;top:243px;font-size:14px;line-height:20px;color:#fff;transform:scaleX(1.0000);">壁</div>
<div class="abs pb" style="left:190px;top:319px"></div><svg class="abs" style="left:190px;top:319px" width="50" height="56" viewBox="0 0 50 56"><path d="M8.5 11.1 L36.7 27.3 L36.7 46.4 L8.5 30.2 Z" fill="#e9ebed" /><path d="M8.5 11.1 L12.7 8.1 L40.9 24.3 L36.7 27.3 Z" fill="#fbfbfc" /><path d="M36.7 27.3 L40.9 24.3 L40.9 43.4 L36.7 46.4 Z" fill="#c3c7cb" /><path d="M15.6 15.1 L27.7 22.1 L27.7 41.2 L15.6 34.2 Z" fill="#a64854" opacity=".92"/><path d="M15.6 15.1 L19.8 12.1 L31.9 19.1 L27.7 22.1 Z" fill="#c8707a" /><path d="M15.6 15.1 L17.8 16.4 L17.8 35.5 L15.6 34.2 Z" fill="#c8707a" opacity=".8"/></svg><div class="abs t gothicj" style="left:253.5px;top:334px;font-size:14px;line-height:20px;color:#fff;transform:scaleX(1.0476);">壁削除</div>
<div class="abs pb" style="left:324px;top:319px"></div><svg class="abs" style="left:324px;top:319px" width="50" height="56" viewBox="0 0 50 56"><path d="M8.5 11.1 L36.7 27.3 L36.7 46.4 L8.5 30.2 Z" fill="#e9ebed" /><path d="M8.5 11.1 L12.7 8.1 L40.9 24.3 L36.7 27.3 Z" fill="#fbfbfc" /><path d="M36.7 27.3 L40.9 24.3 L40.9 43.4 L36.7 46.4 Z" fill="#c3c7cb" /><path d="M15.6 20.9 L27.7 27.8 L27.7 35.9 L15.6 28.9 Z" fill="#a64854" /><path d="M15.6 20.9 L27.7 27.8 L27.7 30.1 L15.6 23.2 Z" fill="#8a3842" /><path d="M15.6 20.9 L17.5 22.0 L17.5 30.0 L15.6 28.9 Z" fill="#c8707a" /></svg><div class="abs t gothicj" style="left:388.0px;top:334px;font-size:14px;line-height:20px;color:#fff;transform:scaleX(1.0238);">壁開口</div>
<div class="abs pb" style="left:190px;top:381px"></div><svg class="abs" style="left:190px;top:381px" width="50" height="56" viewBox="0 0 50 56"><path d="M8.5 20.6 L36.7 36.8 L36.7 46.4 L8.5 30.2 Z" fill="#e9ebed" /><path d="M36.7 36.8 L40.9 33.8 L40.9 43.4 L36.7 46.4 Z" fill="#c3c7cb" /><path d="M8.5 11.1 L36.7 27.3 L36.7 36.8 L8.5 20.6 Z" fill="#a64854" /><path d="M8.5 11.1 L12.7 8.1 L40.9 24.3 L36.7 27.3 Z" fill="#8e3e48" /><path d="M36.7 27.3 L40.9 24.3 L40.9 33.8 L36.7 36.8 Z" fill="#8a3a44" /><path d="M8.5 13.4 L36.7 29.6 L36.7 31.1 L8.5 14.9 Z" fill="#8e3e48" opacity=".7"/></svg><div class="abs t gothicj" style="left:255.5px;top:396px;font-size:14px;line-height:20px;color:#fff;transform:scaleX(1.0131);">壁高さ</div>
<div class="abs pb" style="left:324px;top:381px"></div><svg class="abs" style="left:324px;top:381px" width="50" height="56" viewBox="0 0 50 56"><path d="M8.5 11.1 L36.7 27.3 L36.7 36.8 L8.5 20.6 Z" fill="#e9ebed" /><path d="M36.7 27.3 L40.9 24.3 L40.9 33.8 L36.7 36.8 Z" fill="#c3c7cb" /><path d="M8.5 11.1 L12.7 8.1 L40.9 24.3 L36.7 27.3 Z" fill="#fbfbfc" /><path d="M8.5 20.6 L36.7 36.8 L36.7 46.4 L8.5 30.2 Z" fill="#a64854" /><path d="M36.7 36.8 L40.9 33.8 L40.9 43.4 L36.7 46.4 Z" fill="#8a3a44" /><path d="M8.5 27.5 L36.7 43.7 L36.7 45.1 L8.5 28.9 Z" fill="#8e3e48" opacity=".7"/></svg><div class="abs t gothicj" style="left:388.0px;top:396px;font-size:14px;line-height:20px;color:#fff;transform:scaleX(1.0303);">垂れ壁</div>
<div class="abs pb" style="left:190px;top:443px"></div><svg class="abs" style="left:190px;top:443px" width="50" height="56" viewBox="0 0 50 56"><path d="M6 14.400 L19.500 21.200 L21.500 23.300 L21.500 20.800 L35 27.700 L35 43.400 L21.500 37.600 L19.500 36.800 L6 31 Z" fill="#f0f1f3"/><path d="M19.500 21.200 L21.500 20.800 L21.500 37.600 L19.500 36.800 Z" fill="#c8ccd0"/><path d="M6 14.400 L13.400 10.300 L39.100 24.400 L35 27.700 Z" fill="#ff9a9e"/><path d="M35 27.700 L39.100 24.400 L39.100 41 L35 43.400 Z" fill="#b9bec3"/><g transform="translate(12 23) rotate(-28)"><path d="M-3.500 0 H1" stroke="#cf2566" stroke-width="1.900"/><path d="M-.500 -3 L3.800 0 L-.500 3 Z" fill="#cf2566"/></g><g transform="translate(26 29.5) rotate(-28)"><path d="M-3.500 0 H1" stroke="#cf2566" stroke-width="1.900"/><path d="M-.500 -3 L3.800 0 L-.500 3 Z" fill="#cf2566"/></g><g transform="translate(29.5 13.5) rotate(152)"><path d="M-3.500 0 H1" stroke="#cf2566" stroke-width="1.900"/><path d="M-.500 -3 L3.800 0 L-.500 3 Z" fill="#cf2566"/></g><g transform="translate(42 19.5) rotate(152)"><path d="M-3.500 0 H1" stroke="#cf2566" stroke-width="1.900"/><path d="M-.500 -3 L3.800 0 L-.500 3 Z" fill="#cf2566"/></g></svg><div class="abs t gothicj" style="left:240.5px;top:458px;font-size:14px;line-height:20px;color:#fff;transform:scaleX(1.0715);">壁厚(部分)</div>
<div class="abs pb" style="left:324px;top:443px"></div><svg class="abs" style="left:324px;top:443px" width="50" height="56" viewBox="0 0 50 56"><path d="M6 14.400 L19.500 21.200 L21.500 23.300 L21.500 20.800 L35 27.700 L35 43.400 L21.500 37.600 L19.500 36.800 L6 31 Z" fill="#f0f1f3"/><path d="M19.500 21.200 L21.500 20.800 L21.500 37.600 L19.500 36.800 Z" fill="#c8ccd0"/><path d="M6 14.400 L13.400 10.300 L39.100 24.400 L35 27.700 Z" fill="#9cc8ff"/><path d="M35 27.700 L39.100 24.400 L39.100 41 L35 43.400 Z" fill="#b9bec3"/><g transform="translate(12 23) rotate(-28)"><path d="M-3.500 0 H1" stroke="#12a8c0" stroke-width="1.900"/><path d="M-.500 -3 L3.800 0 L-.500 3 Z" fill="#12a8c0"/></g><g transform="translate(26 29.5) rotate(-28)"><path d="M-3.500 0 H1" stroke="#12a8c0" stroke-width="1.900"/><path d="M-.500 -3 L3.800 0 L-.500 3 Z" fill="#12a8c0"/></g><g transform="translate(29.5 13.5) rotate(152)"><path d="M-3.500 0 H1" stroke="#12a8c0" stroke-width="1.900"/><path d="M-.500 -3 L3.800 0 L-.500 3 Z" fill="#12a8c0"/></g><g transform="translate(42 19.5) rotate(152)"><path d="M-3.500 0 H1" stroke="#12a8c0" stroke-width="1.900"/><path d="M-.500 -3 L3.800 0 L-.500 3 Z" fill="#12a8c0"/></g></svg><div class="abs t gothicj" style="left:374.5px;top:458px;font-size:14px;line-height:20px;color:#fff;transform:scaleX(1.0715);">壁厚(外周)</div>
<div class="abs pb" style="left:190px;top:505px"></div><svg class="abs" style="left:190px;top:505px" width="50" height="56" viewBox="0 0 50 56"><defs><linearGradient id="grw" x1="0" y1="0" x2="1" y2="0"><stop offset="0" stop-color="#d2d5d8"/><stop offset=".35" stop-color="#f4f5f6"/><stop offset=".8" stop-color="#c9cdd0"/><stop offset="1" stop-color="#aeb3b8"/></linearGradient></defs><path d="M8.500 11.300 C10 20 24 26 36.700 25.200 L41.100 22.900 L41.100 43.600 L36.700 45.800 C24 46.500 10 41 8.500 32.800 Z" fill="url(#grw)"/><path d="M8.500 11.300 L11.800 8 C13 16 27 22.500 41.100 22.900 L36.700 25.400 C24 26.200 10 20 8.500 11.300 Z" fill="#f08c8e"/></svg><div class="abs t gothicj" style="left:264.0px;top:520px;font-size:14px;line-height:20px;color:#fff;transform:scaleX(0.9966);">R壁</div>
<div class="abs pb" style="left:190px;top:567px"></div><svg class="abs" style="left:190px;top:567px" width="50" height="56" viewBox="0 0 50 56"><defs><linearGradient id="gcw" x1="0" y1="0" x2="1" y2="1"><stop offset="0" stop-color="#6fd6e8"/><stop offset=".5" stop-color="#2f8fc0"/><stop offset="1" stop-color="#1c5a98"/></linearGradient></defs><path d="M8.5 11.1 L36.7 27.3 L36.7 46.4 L8.5 30.2 Z" fill="#eef0f2" /><path d="M8.5 11.1 L12.7 8.1 L40.9 24.3 L36.7 27.3 Z" fill="#ffffff" /><path d="M36.7 27.3 L40.9 24.3 L40.9 43.4 L36.7 46.4 Z" fill="#bfc4c9" /><path d="M9.9 13.4 L17.0 17.5 L17.0 33.5 L9.9 29.5 Z" fill="url(#gcw)" /><path d="M18.9 18.6 L26.3 22.8 L26.3 38.9 L18.9 34.7 Z" fill="url(#gcw)" /><path d="M28.2 24.0 L35.3 28.0 L35.3 44.1 L28.2 40.0 Z" fill="url(#gcw)" /></svg><div class="abs t gothicj" style="left:253.0px;top:575.5px;font-size:14px;line-height:20px;color:#fff;transform:scaleX(0.8952);">カーテン</div>
<div class="abs t gothicj" style="left:253.0px;top:590.5px;font-size:14px;line-height:20px;color:#fff;transform:scaleX(0.9260);">ウォール</div>
<div class="abs pb" style="left:324px;top:567px"></div><svg class="abs" style="left:324px;top:567px" width="50" height="56" viewBox="0 0 50 56"><g stroke="#c07a2a" fill="none"><path d="M12 10 V31" stroke-width="3.600" stroke="#b8722a"/><path d="M11.200 8.500 h1.600" stroke-width="2" /><path d="M10.500 11.500 L40.500 28.800" stroke-width="2.600" stroke="#cf8a38"/><path d="M16.5 15.0 V32.5" stroke-width="1.700"/><path d="M19.8 16.9 V34.4" stroke-width="1.700"/><path d="M23.1 18.8 V36.3" stroke-width="1.700"/><path d="M26.4 20.7 V38.2" stroke-width="1.700"/><path d="M29.7 22.6 V40.1" stroke-width="1.700"/><path d="M33.0 24.5 V42.0" stroke-width="1.700"/><path d="M36.3 26.4 V43.9" stroke-width="1.700"/><path d="M39.6 28.3 V45.8" stroke-width="1.700"/><path d="M40 28.500 V45" stroke-width="2.200" stroke="#d08a38"/></g></svg><div class="abs t gothicj" style="left:384.0px;top:582px;font-size:14px;line-height:20px;color:#fff;transform:scaleX(0.9900);">手すり柵</div>
<div class="abs pb" style="left:190px;top:670px"></div><svg class="abs" style="left:190px;top:670px" width="50" height="56" viewBox="0 0 50 56"><path d="M24.500 11.500 L42.600 20.400 L42.600 32.900 L24.500 41.800 L7 32.900 L7 20.400 Z" fill="#d04a52"/><path d="M7 22.200 L24.500 31 L24.500 41.800 L7 32.900 Z" fill="#ececec"/><path d="M42.600 22.200 L24.500 31 L24.500 41.800 L42.600 32.900 Z" fill="#c4c4c4"/><path d="M24.500 14.500 L38.500 21.300 L24.500 28.500 L10.800 21.300 Z" fill="#ffffff"/><path d="M24.500 14.500 L38.500 21.300 L38.500 28.300 L24.500 21.500 Z" fill="#f3f3f3"/><path d="M24.500 14.500 L10.800 21.300 L10.800 28.300 L24.500 21.500 Z" fill="#dcdcdc"/><path d="M24.500 21.500 L38.500 28.300 L24.500 35.200 L10.800 28.300 Z" fill="#4a90d9"/></svg><div class="abs t gothicj" style="left:253.5px;top:685px;font-size:14px;line-height:20px;color:#fff;transform:scaleX(1.0476);">床段差</div>
<div class="abs pb" style="left:324px;top:670px"></div><svg class="abs" style="left:324px;top:670px" width="50" height="56" viewBox="0 0 50 56"><path d="M8.400 32 L26.500 13.300 L42.700 21.300 L24.900 40.300 Z" fill="#e2e2e2"/><path d="M42.700 21.300 L42.700 32.900 L24.900 40.300 Z" fill="#a9a9a9"/><path d="M17 36.300 L31.500 20.500" stroke="#d8353c" stroke-width="2.400"/><path d="M27 19 L34.500 17.200 L33.200 25 Z" fill="#d8353c"/></svg><div class="abs t gothicj" style="left:386.5px;top:685px;font-size:14px;line-height:20px;color:#fff;transform:scaleX(0.9050);">スロープ</div>
<div class="abs pb" style="left:190px;top:771px"></div><svg class="abs" style="left:190px;top:771px" width="50" height="56" viewBox="0 0 50 56"><defs><linearGradient id="gq1" x1="0" y1="0" x2="0" y2="1"><stop offset="0" stop-color="#f2b848"/><stop offset=".45" stop-color="#e0a438"/><stop offset="1" stop-color="#e0a438" stop-opacity="0"/></linearGradient><linearGradient id="gq2" x1="0" y1="0" x2="0" y2="1"><stop offset="0" stop-color="#c08a24"/><stop offset=".45" stop-color="#a87418"/><stop offset="1" stop-color="#a87418" stop-opacity="0"/></linearGradient><linearGradient id="gq3" x1="0" y1="0" x2="1" y2="1"><stop offset="0" stop-color="#f6cc60"/><stop offset="1" stop-color="#d8a030"/></linearGradient></defs><path d="M6.100 20.600 L24.700 29.900 L24.700 46 L6.100 46 Z" fill="url(#gq1)"/><path d="M43.900 20.600 L24.700 29.900 L24.700 46 L43.900 46 Z" fill="url(#gq2)"/><path d="M24.700 10.300 L43.900 20.600 L24.700 29.900 L6.100 20.600 Z" fill="url(#gq3)"/></svg><div class="abs t gothicj" style="left:253.5px;top:786px;font-size:14px;line-height:20px;color:#fff;transform:scaleX(1.0476);">四角柱</div>
<div class="abs pb" style="left:324px;top:771px"></div><svg class="abs" style="left:324px;top:771px" width="50" height="56" viewBox="0 0 50 56"><defs><linearGradient id="gc1" x1="0" y1="0" x2="1" y2="0"><stop offset="0" stop-color="#f6c050"/><stop offset=".35" stop-color="#e8ac3c"/><stop offset="1" stop-color="#a87418"/></linearGradient><linearGradient id="gc2" x1="0" y1="0" x2="0" y2="1"><stop offset="0" stop-color="#000" stop-opacity="0"/><stop offset=".45" stop-color="#000" stop-opacity="0"/><stop offset="1" stop-color="#0a0b0c" stop-opacity="1"/></linearGradient></defs><path d="M7 16.500 A18.400 6.200 0 0 0 43.800 16.500 V46 H7 Z" fill="url(#gc1)"/><rect x="6" y="16" width="39" height="31" fill="url(#gc2)"/><ellipse cx="25.400" cy="16.500" rx="18.400" ry="6.200" fill="#e2aa3c"/></svg><div class="abs t gothicj" style="left:395.0px;top:786px;font-size:14px;line-height:20px;color:#fff;transform:scaleX(1.0357);">円柱</div>
<div class="abs pb" style="left:190px;top:833px"></div><svg class="abs" style="left:190px;top:833px" width="50" height="56" viewBox="0 0 50 56"><defs><linearGradient id="gb1" x1="0" y1="0" x2="0" y2="1"><stop offset="0" stop-color="#d49a30"/><stop offset="1" stop-color="#9a6c18"/></linearGradient></defs><path d="M6.200 27.300 L39.400 12.300 L44 17.300 L13.300 32.400 Z" fill="#f0bc4c"/><path d="M13.300 32.400 L44 17.300 L44 25.300 L13.300 41.400 Z" fill="url(#gb1)"/><path d="M6.200 27.300 L13.300 32.400 L13.300 41.400 L6.200 36.400 Z" fill="#e6ac3e"/></svg><div class="abs t gothicj" style="left:268.5px;top:848px;font-size:14px;line-height:20px;color:#fff;transform:scaleX(1.0000);">梁</div>

<div class="abs" style="left:473px;top:118px;width:862px;height:797px;background:#797e82;"></div><div class="abs" style="left:472px;top:118px;width:1px;height:797px;background:#4b5056;"></div><div class="abs" style="left:1335px;top:113px;width:6px;height:808px;background:#15181b;"></div><svg class="abs" style="left:474px;top:118px" width="861" height="797" viewBox="474 118 861 797"><rect x="501" y="144" width="814" height="751" fill="#fff"/><path d="M565.5 133 V142 M665.5 133 V142 M765.5 133 V142 M865.5 133 V142 M965.5 133 V142 M1065.5 133 V142 M1165.5 133 V142 M1265.5 133 V142 M515.5 138 V142 M615.5 138 V142 M715.5 138 V142 M815.5 138 V142 M915.5 138 V142 M1015.5 138 V142 M1115.5 138 V142 M1215.5 138 V142 M490 212.5 H499 M490 312.5 H499 M490 412.5 H499 M490 512.5 H499 M490 612.5 H499 M490 712.5 H499 M490 812.5 H499 M495 162.5 H499 M495 262.5 H499 M495 362.5 H499 M495 462.5 H499 M495 562.5 H499 M495 662.5 H499 M495 762.5 H499 M495 862.5 H499 " stroke="#fff" stroke-width="1" fill="none"/><path d="M565.5 144 V895 M765.5 144 V895 M865.5 144 V895 M965.5 144 V895 M1065.5 144 V895 M1265.5 144 V895 M501 212.5 H1315 M501 412.5 H1315 M501 512.5 H1315 M501 612.5 H1315 M501 712.5 H1315 " stroke="#c4c4c4" stroke-width="1" stroke-dasharray="2 2" fill="none"/><path d="M665.5 144 V895 M1165.5 144 V895 M501 312.5 H1315 M501 812.5 H1315 " stroke="#cfcfcf" stroke-width="1" fill="none"/><path d="M514 161h2v2h-2zM514 261h2v2h-2zM514 361h2v2h-2zM514 461h2v2h-2zM514 561h2v2h-2zM514 661h2v2h-2zM514 761h2v2h-2zM514 861h2v2h-2zM614 161h2v2h-2zM614 261h2v2h-2zM614 361h2v2h-2zM614 461h2v2h-2zM614 561h2v2h-2zM614 661h2v2h-2zM614 761h2v2h-2zM614 861h2v2h-2zM714 161h2v2h-2zM714 261h2v2h-2zM714 361h2v2h-2zM714 461h2v2h-2zM714 561h2v2h-2zM714 661h2v2h-2zM714 761h2v2h-2zM714 861h2v2h-2zM814 161h2v2h-2zM814 261h2v2h-2zM814 361h2v2h-2zM814 461h2v2h-2zM814 561h2v2h-2zM814 661h2v2h-2zM814 761h2v2h-2zM814 861h2v2h-2zM914 161h2v2h-2zM914 261h2v2h-2zM914 361h2v2h-2zM914 461h2v2h-2zM914 561h2v2h-2zM914 661h2v2h-2zM914 761h2v2h-2zM914 861h2v2h-2zM1014 161h2v2h-2zM1014 261h2v2h-2zM1014 361h2v2h-2zM1014 461h2v2h-2zM1014 561h2v2h-2zM1014 661h2v2h-2zM1014 761h2v2h-2zM1014 861h2v2h-2zM1114 161h2v2h-2zM1114 261h2v2h-2zM1114 361h2v2h-2zM1114 461h2v2h-2zM1114 561h2v2h-2zM1114 661h2v2h-2zM1114 761h2v2h-2zM1114 861h2v2h-2zM1214 161h2v2h-2zM1214 261h2v2h-2zM1214 361h2v2h-2zM1214 461h2v2h-2zM1214 561h2v2h-2zM1214 661h2v2h-2zM1214 761h2v2h-2zM1214 861h2v2h-2zM1314 161h2v2h-2zM1314 261h2v2h-2zM1314 361h2v2h-2zM1314 461h2v2h-2zM1314 561h2v2h-2zM1314 661h2v2h-2zM1314 761h2v2h-2zM1314 861h2v2h-2z" fill="#c6c6c6"/><path d="M665.500 212 V307 M565 312.500 H661" stroke="#0a8a0a" stroke-width="1.200" fill="none"/><rect x="660.500" y="307" width="510.500" height="411" fill="#6b6d70"/><rect x="670.500" y="318" width="490" height="389.500" fill="#e8d8ba"/><path d="M670.500 327.5 H1160.500 M670.500 342.5 H1160.500 M670.500 357.5 H1160.500 M670.500 372.5 H1160.500 M670.500 387.5 H1160.500 M670.500 402.5 H1160.500 M670.500 417.5 H1160.500 M670.500 432.5 H1160.500 M670.500 447.5 H1160.500 M670.500 462.5 H1160.500 M670.500 477.5 H1160.500 M670.500 492.5 H1160.500 M670.500 507.5 H1160.500 M670.500 522.5 H1160.500 M670.500 537.5 H1160.500 M670.500 552.5 H1160.500 M670.500 567.5 H1160.500 M670.500 582.5 H1160.500 M670.500 597.5 H1160.500 M670.500 612.5 H1160.500 M670.500 627.5 H1160.500 M670.500 642.5 H1160.500 M670.500 657.5 H1160.500 M670.500 672.5 H1160.500 M670.500 687.5 H1160.500 M670.500 702.5 H1160.500 " stroke="#bfb3a3" stroke-width="1" fill="none"/><path d="M765.5 318 V707 M865.5 318 V707 M965.5 318 V707 M1065.5 318 V707 M671 412.5 H1160 M671 512.5 H1160 M671 612.5 H1160 " stroke="#d2cfc6" stroke-width="1" stroke-dasharray="2 2" fill="none"/><path d="M714 361h2v2h-2zM714 461h2v2h-2zM714 561h2v2h-2zM714 661h2v2h-2zM814 361h2v2h-2zM814 461h2v2h-2zM814 561h2v2h-2zM814 661h2v2h-2zM914 361h2v2h-2zM914 461h2v2h-2zM914 561h2v2h-2zM914 661h2v2h-2zM1014 361h2v2h-2zM1014 461h2v2h-2zM1014 561h2v2h-2zM1014 661h2v2h-2zM1114 361h2v2h-2zM1114 461h2v2h-2zM1114 561h2v2h-2zM1114 661h2v2h-2z" fill="#c9c2b4"/><rect x="1065.500" y="318" width="95" height="194.500" fill="#bababa"/><path d="M1076 412.500 H1160" stroke="#d6d6d6" stroke-width="1" stroke-dasharray="2 2" fill="none"/><path d="M1114 361h2v2h-2z M1114 461h2v2h-2z" fill="#cfcfcf"/><path d="M1065.500 330.500 H1070.500 M1065.500 330 V412 M1060.500 412 V495.500 H1065.500 M1052 412.500 H1076" stroke="#5c5c5c" stroke-width="1" fill="none"/><path d="M1070.500 330 V412" stroke="#666" stroke-width="1" fill="none"/><path d="M1060.500 318 V517.500 H1160.500 M1070.500 318 V507.500 H1160.500" stroke="#50555c" stroke-width="1" stroke-dasharray="6 3" fill="none"/><rect x="1065.500" y="312.500" width="100" height="200" fill="none" stroke="#f01010" stroke-width="1.200" stroke-dasharray="5 3"/><rect x="1060.5" y="307.5" width="10" height="10" fill="#ffff00" stroke="#000" stroke-width="1"/><rect x="1110.5" y="307.5" width="10" height="10" fill="#ffff00" stroke="#000" stroke-width="1"/><rect x="1160.5" y="307.5" width="10" height="10" fill="#ffff00" stroke="#000" stroke-width="1"/><rect x="1060.5" y="407.5" width="10" height="10" fill="#ffff00" stroke="#000" stroke-width="1"/><rect x="1160.5" y="407.5" width="10" height="10" fill="#ffff00" stroke="#000" stroke-width="1"/><rect x="1060.5" y="507.5" width="10" height="10" fill="#ffff00" stroke="#000" stroke-width="1"/><rect x="1110.5" y="507.5" width="10" height="10" fill="#ffff00" stroke="#000" stroke-width="1"/><rect x="1160.5" y="507.5" width="10" height="10" fill="#ffff00" stroke="#000" stroke-width="1"/><text x="1115" y="417" text-anchor="middle" font-family="Liberation Sans,IPAPGothic,IPAGothic,sans-serif" font-size="19.500" fill="#1a1a1a" textLength="38.500" lengthAdjust="spacingAndGlyphs">納戸</text><rect x="1315" y="144" width="20" height="751" fill="#f0f0f0"/><rect x="501" y="895" width="834" height="20" fill="#f0f0f0"/><rect x="1315" y="549" width="20" height="21" fill="#c1c1c1"/><rect x="935" y="895" width="20" height="20" fill="#c1c1c1"/><path d="M1320.500 157 L1325 152.500 L1329.500 157 M1320.500 881 L1325 885.500 L1329.500 881 M513 900 L508.500 904.500 L513 909 M1301 900 L1305.500 904.500 L1301 909" stroke="#555" stroke-width="1.600" fill="none"/></svg>
<div class="abs t gothicj" style="left:1349.5px;top:117px;font-size:14.5px;line-height:20px;color:#fff;transform:scaleX(0.8943);">梁プロパティ</div>
<svg class="abs" style="left:1560px;top:116px" width="22" height="22" viewBox="0 0 22 22"><rect x=".750" y=".750" width="20.500" height="20.500" fill="#1e2328" stroke="#e8e8e8" stroke-width="1.500"/><rect x="15.500" y="1.500" width="5" height="19" fill="#f0b41e"/><path d="M4 3.500 V18.500 L12 11 Z" fill="#e0e0ec"/></svg><div class="abs" style="left:1341px;top:142px;width:250px;height:1px;background:#666b70;"></div><div class="abs t gothicj" style="left:1347px;top:150.5px;font-size:14.5px;line-height:20px;color:#f3b829;transform:scaleX(0.8554);">サイズ</div>
<div class="abs t gothicj" style="left:1347.5px;top:177px;font-size:14.5px;line-height:20px;color:#fff;transform:scaleX(0.8359);">横:</div>
<div class="abs inp" style="left:1431px;top:175px;width:112px;height:23px"></div><div class="abs t gothic" style="left:1509px;top:177px;font-size:14px;line-height:20px;color:#000;transform:scaleX(0.9629);">1000</div>
<div class="abs t gothic" style="left:1548.5px;top:180.5px;font-size:11px;line-height:15px;color:#fff;letter-spacing:1px;transform:scaleX(0.7379);">mm</div>
<div class="abs t gothicj" style="left:1347.5px;top:204px;font-size:14.5px;line-height:20px;color:#fff;transform:scaleX(0.8359);">縦:</div>
<div class="abs inp" style="left:1431px;top:203px;width:112px;height:22px"></div><div class="abs t gothic" style="left:1509px;top:204.5px;font-size:14px;line-height:20px;color:#000;transform:scaleX(0.9629);">2000</div>
<div class="abs t gothic" style="left:1548.5px;top:207.5px;font-size:11px;line-height:15px;color:#fff;letter-spacing:1px;transform:scaleX(0.7379);">mm</div>
<div class="abs ysep" style="left:1347px;top:233px;width:231px"></div><svg class="abs" style="left:1346px;top:248px" width="20" height="20" viewBox="0 0 20 20"><defs><linearGradient id="grt" x1="0" y1="0" x2="1" y2="0"><stop offset="0" stop-color="#f4f4f4"/><stop offset="1" stop-color="#8a8e92"/></linearGradient></defs><path d="M5 4 V13 A5 2.200 0 0 0 15 13 V4 Z" fill="url(#grt)"/><ellipse cx="10" cy="4" rx="5" ry="2.200" fill="#e8eaec" stroke="#9a9ea2" stroke-width=".500"/><path d="M2.500 15.500 C5 19.500 15 19.500 17.500 15.500" stroke="#e8b020" stroke-width="1.800" fill="none"/><path d="M1 13.500 L5 14.500 L2 18 Z M19 13.500 L15 14.500 L18 18 Z" fill="#e8b020"/></svg><div class="abs t gothicj" style="left:1370px;top:249px;font-size:14.5px;line-height:20px;color:#fff;transform:scaleX(0.9512);">回転:</div>
<div class="abs inp" style="left:1411px;top:249px;width:48px;height:21px"></div><div class="abs t gothic" style="left:1440px;top:250px;font-size:14px;line-height:20px;color:#000;transform:scaleX(0.9629);">15</div>
<div class="abs t gothicj" style="left:1464.5px;top:249px;font-size:14.5px;line-height:20px;color:#fff;transform:scaleX(0.9655);">度</div>
<div class="abs" style="left:1493px;top:248px;width:25px;height:22px;background:linear-gradient(#2a2e32,#000);border:1px solid #50555a;box-sizing:border-box;"></div><svg class="abs" style="left:1493px;top:248px" width="25" height="22" viewBox="0 0 25 22"><g><path d="M8.500 7.500 A6 6 0 1 0 13.500 6" stroke="#e8e8e8" stroke-width="1.800" fill="none"/><path d="M12.500 2.500 L8 7 L13.500 9.500 Z" fill="#e8e8e8"/></g></svg><div class="abs" style="left:1523px;top:248px;width:25px;height:22px;background:linear-gradient(#2a2e32,#000);border:1px solid #50555a;box-sizing:border-box;"></div><svg class="abs" style="left:1523px;top:248px" width="25" height="22" viewBox="0 0 25 22"><g transform="translate(25 0) scale(-1 1)"><path d="M8.500 7.500 A6 6 0 1 0 13.500 6" stroke="#e8e8e8" stroke-width="1.800" fill="none"/><path d="M12.500 2.500 L8 7 L13.500 9.500 Z" fill="#e8e8e8"/></g></svg><div class="abs rdd" style="left:1347px;top:275px;width:113px;height:23px"></div><div class="abs t gothicj" style="left:1352px;top:276.5px;font-size:14.5px;line-height:20px;color:#fff;transform:scaleX(1.0172);">数値移動</div>
<div class="abs" style="left:1445px;top:282px;width:0;height:0;border-left:5.500px solid transparent;border-right:5.500px solid transparent;border-top:9px solid #73787d;"></div><div class="abs rdd" style="left:1465px;top:275px;width:112px;height:23px"></div><div class="abs t gothicj" style="left:1470px;top:276.5px;font-size:14.5px;line-height:20px;color:#fff;transform:scaleX(0.9156);">数値コピー</div>
<div class="abs" style="left:1562px;top:282px;width:0;height:0;border-left:5.500px solid transparent;border-right:5.500px solid transparent;border-top:9px solid #73787d;"></div><div class="abs ysep" style="left:1347px;top:305px;width:231px"></div><div class="abs t gothicj" style="left:1348px;top:318px;font-size:14.5px;line-height:20px;color:#f3b829;transform:scaleX(1.0069);">立体化設定</div>
<div class="abs t gothicj" style="left:1347.5px;top:344px;font-size:14.5px;line-height:20px;color:#fff;transform:scaleX(0.9959);">梁高(梁成):</div>
<div class="abs inp" style="left:1431px;top:344px;width:112px;height:21px"></div><div class="abs t gothic" style="left:1524px;top:345px;font-size:14px;line-height:20px;color:#000;transform:scaleX(0.9629);">10</div>
<div class="abs t gothic" style="left:1548.5px;top:347.5px;font-size:11px;line-height:15px;color:#fff;letter-spacing:1px;transform:scaleX(0.7379);">mm</div>
<svg class="abs" style="left:1346.500px;top:372.5px" width="15" height="15" viewBox="0 0 15 15"><circle cx="7.500" cy="7.500" r="6.500" fill="#fff" stroke="#8a8f94" stroke-width="1.200"/></svg><div class="abs t gothicj" style="left:1366px;top:370px;font-size:14.5px;line-height:20px;color:#fff;transform:scaleX(0.9268);">天井につける</div>
<svg class="abs" style="left:1346.500px;top:400.5px" width="15" height="15" viewBox="0 0 15 15"><circle cx="7.500" cy="7.500" r="6.500" fill="#fff" stroke="#8a8f94" stroke-width="1.200"/><circle cx="7.500" cy="7.500" r="3.200" fill="#000"/></svg><div class="abs t gothicj" style="left:1366px;top:398px;font-size:14.5px;line-height:20px;color:#fff;transform:scaleX(0.9396);">床からの高さを指定</div>
<div class="abs t gothicj" style="left:1367.5px;top:427px;font-size:14.5px;line-height:20px;color:#fff;transform:scaleX(0.9116);">床からの高さ:</div>
<div class="abs inp" style="left:1451px;top:425px;width:80px;height:21px"></div><div class="abs t gothic" style="left:1504px;top:426px;font-size:14px;line-height:20px;color:#000;transform:scaleX(0.9846);">500</div>
<div class="abs t gothic" style="left:1537px;top:430.5px;font-size:11px;line-height:15px;color:#fff;letter-spacing:1px;transform:scaleX(0.7379);">mm</div>
<svg class="abs" style="left:1346.500px;top:455.5px" width="15" height="15" viewBox="0 0 15 15"><circle cx="7.500" cy="7.500" r="6.500" fill="#fff" stroke="#8a8f94" stroke-width="1.200"/></svg><div class="abs t gothicj" style="left:1366px;top:453px;font-size:14.5px;line-height:20px;color:#fff;transform:scaleX(0.9645);">両端の高さを指定</div>
<div class="abs ysep" style="left:1347px;top:482.500px;width:231px"></div><div class="abs" style="left:1347.500px;top:501.500px;width:14px;height:14px;background:#fff;border:1px solid #8a8f94;box-sizing:border-box;"></div><div class="abs t gothicj" style="left:1366px;top:498px;font-size:14.5px;line-height:20px;color:#fff;transform:scaleX(0.9707);">既定値として保存</div>
<div class="abs rdd" style="left:1347px;top:525px;width:231px;height:22px"></div><div class="abs t gothicj" style="left:1401px;top:526px;font-size:14.5px;line-height:20px;color:#fff;transform:scaleX(0.9660);">出荷時の設定に戻す</div>

<div class="abs" style="left:1px;top:247px;width:173px;height:44px;box-sizing:border-box;border:5.500px solid #ed1c24;"></div><div class="abs" style="left:177px;top:823px;width:149px;height:77px;box-sizing:border-box;border:5px solid #ed1c24;"></div><div class="abs" style="left:1319px;top:366px;width:259px;height:5px;border-radius:2.500px;background:#ed1c24;"></div><div class="abs" style="left:1318px;top:447px;width:261px;height:5px;border-radius:2.500px;background:#ed1c24;"></div><div class="abs" style="left:0;top:0;width:1590px;height:919px;border:1px solid #6a6a6a;"></div>
</div>
</body>
</html>
